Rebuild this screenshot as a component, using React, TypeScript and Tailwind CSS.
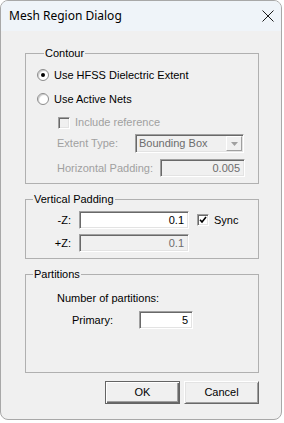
import { type ReactNode } from "react";

const sunken =
  "border border-t-[#a0a0a0] border-l-[#a0a0a0] border-b-white border-r-white shadow-[inset_1px_1px_0_#696969,inset_-1px_-1px_0_#e3e3e3]";

function Group({ label, className, children }: { label: string; className: string; children: ReactNode }) {
  return (
    <fieldset className={`border border-[#b0b0b0] mx-0 ${className}`}>
      <legend className="ml-[7px] px-[1px] leading-[13px]">{label}</legend>
      {children}
    </fieldset>
  );
}

function Radio({ checked }: { checked?: boolean }) {
  return (
    <span className="flex h-[12px] w-[12px] items-center justify-center rounded-full border border-[#8c8c8c] bg-white shadow-[inset_1px_1px_1px_#c8c8c8]">
      {checked && <span className="h-[4px] w-[4px] rounded-full bg-black" />}
    </span>
  );
}

function Check({ checked, disabled }: { checked?: boolean; disabled?: boolean }) {
  return (
    <span
      className={`flex h-[12px] w-[12px] items-center justify-center ${sunken} ${disabled ? "bg-[#f0f0f0]" : "bg-white"}`}
    >
      {checked && (
        <svg viewBox="0 0 8 8" className="h-[8px] w-[8px]" fill="none" stroke="black" strokeWidth="1.6">
          <path d="M1 3.8l2 2.2 4-5" />
        </svg>
      )}
    </span>
  );
}

function Field({ value, disabled, className }: { value: string; disabled?: boolean; className: string }) {
  return (
    <div
      className={`flex items-center justify-end pr-[4px] ${sunken} ${disabled ? "bg-[#f0f0f0] text-[#6d6d6d]" : "bg-white text-black"} ${className}`}
    >
      {value}
    </div>
  );
}

function Button({ label, primary }: { label: string; primary?: boolean }) {
  return (
    <div
      className={`flex h-[23px] w-[75px] items-center justify-center bg-[#f0f0f0] ${
        primary
          ? "border border-[#646464] shadow-[inset_1px_1px_0_#fff,inset_-1px_-1px_0_#696969,inset_-2px_-2px_0_#a0a0a0]"
          : "border border-t-white border-l-white border-b-[#696969] border-r-[#696969] shadow-[inset_1px_1px_0_#e3e3e3,inset_-1px_-1px_0_#a0a0a0]"
      }`}
    >
      {label}
    </div>
  );
}

export default function App() {
  return (
    <div className="min-h-screen bg-white">
      <div
        className="flex h-[420px] w-[282px] flex-col overflow-hidden rounded-[8px] border border-[#a8a8a8] bg-[#f0f0f0] text-[11px] text-black"
        style={{ fontFamily: '"Liberation Sans", Arial, sans-serif' }}
      >
        <div className="flex h-[30px] shrink-0 items-center justify-between bg-[#eff4f9] pl-[8px] pr-[7px]">
          <span className="text-[12px]" style={{ fontFamily: '"Segoe UI", "Noto Sans", sans-serif' }}>
            Mesh Region Dialog
          </span>
          <svg viewBox="0 0 12 12" className="h-[12px] w-[12px]" fill="none" stroke="#1a1a1a" strokeWidth="1">
            <path d="M0.5 0.5l11 11M11.5 0.5l-11 11" />
          </svg>
        </div>

        <div className="flex flex-col pl-[24px] pr-[22px] pt-[16px]">
          <Group label="Contour" className="pl-[11px] pt-[6px] pb-[6px]">
            <div className="flex h-[18px] items-center gap-[5px]">
              <Radio checked />
              <span>Use HFSS Dielectric Extent</span>
            </div>
            <div className="mt-[6px] flex h-[18px] items-center gap-[5px]">
              <Radio />
              <span>Use Active Nets</span>
            </div>
            <div className="mt-[6px] flex h-[17px] items-center gap-[5px] pl-[21px] text-[#a0a0a0]">
              <Check disabled />
              <span>Include reference</span>
            </div>
            <div className="mt-[3px] flex h-[19px] items-center pl-[20px]">
              <span className="w-[78px] text-[#a0a0a0]">Extent Type:</span>
              <div className={`flex h-[19px] w-[109px] items-center justify-between bg-[#f0f0f0] pl-[3px] pr-[1px] text-[#6d6d6d] ${sunken}`}>
                <span>Bounding Box</span>
                <span className="flex h-[15px] w-[16px] items-center justify-center border border-t-white border-l-white border-b-[#a0a0a0] border-r-[#a0a0a0] bg-[#f0f0f0]">
                  <svg viewBox="0 0 7 4" className="h-[4px] w-[7px]">
                    <path d="M0 0h7L3.5 4z" fill="#a0a0a0" />
                  </svg>
                </span>
              </div>
            </div>
            <div className="mt-[6px] flex h-[18px] items-center pl-[20px]">
              <span className="w-[103px] text-[#a0a0a0]">Horizontal Padding:</span>
              <Field value="0.005" disabled className="h-[18px] w-[85px]" />
            </div>
          </Group>

          <Group label="Vertical Padding" className="mt-[9px] pt-[5px] pb-[6px]">
            <div className="flex h-[18px] items-center">
              <span className="w-[53px] pr-[8px] text-right">-Z:</span>
              <Field value="0.1" className="h-[18px] w-[110px]" />
              <span className="ml-[8px]">
                <Check checked />
              </span>
              <span className="ml-[5px]">Sync</span>
            </div>
            <div className="mt-[5px] flex h-[18px] items-center">
              <span className="w-[53px] pr-[8px] text-right">+Z:</span>
              <Field value="0.1" disabled className="h-[18px] w-[110px]" />
            </div>
          </Group>

          <Group label="Partitions" className="mt-[9px] h-[105px] pt-[10px]">
            <div className="flex h-[14px] items-center pl-[31px]">Number of partitions:</div>
            <div className="mt-[6px] flex h-[18px] items-center pl-[46px]">
              <span className="w-[67px]">Primary:</span>
              <Field value="5" className="h-[18px] w-[54px]" />
            </div>
          </Group>

          <div className="mt-[8px] flex justify-end gap-[4px]">
            <Button label="OK" primary />
            <Button label="Cancel" />
          </div>
        </div>
      </div>
    </div>
  );
}
